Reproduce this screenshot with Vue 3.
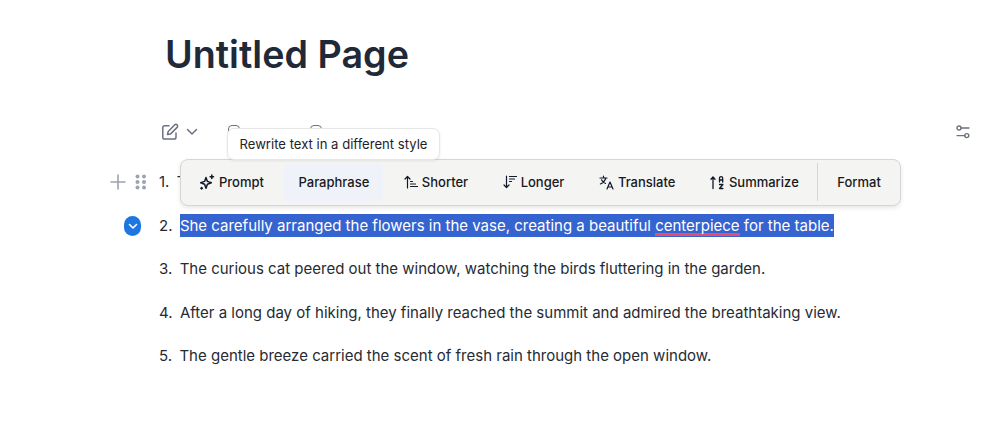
<script setup>
const items = [
  { n: 1, text: 'T' },
  { n: 2, text: 'She carefully arranged the flowers in the vase, creating a beautiful ', miss: 'centerpiece', after: ' for the table.', selected: true },
  { n: 3, text: 'The curious cat peered out the window, watching the birds fluttering in the garden.' },
  { n: 4, text: 'After a long day of hiking, they finally reached the summit and admired the breathtaking view.' },
  { n: 5, text: 'The gentle breeze carried the scent of fresh rain through the open window.' }
]
</script>

<template>
  <div class="page">
    <h1 class="title">Untitled Page</h1>

    <div class="bar">
      <svg class="ic edit" width="18" height="18" viewBox="0 0 18 18" fill="none" stroke="#6b7280" stroke-width="1.5" stroke-linecap="round" stroke-linejoin="round">
        <path d="M8 2.8H3.6A1.8 1.8 0 0 0 1.8 4.6v9.6A1.8 1.8 0 0 0 3.6 16h9.6a1.8 1.8 0 0 0 1.8-1.8V10" />
        <path d="M13.6 1.9a1.7 1.7 0 0 1 2.5 2.5L9.6 10.9l-3.1.7.7-3.1z" />
      </svg>
      <svg class="ic chev" width="12" height="8" viewBox="0 0 12 8" fill="none" stroke="#6b7280" stroke-width="1.5" stroke-linecap="round" stroke-linejoin="round">
        <path d="M1.5 1.5 6 6l4.5-4.5" />
      </svg>
      <div class="ghost g1"></div>
      <div class="ghost g2"></div>
      <svg class="ic sliders" width="14" height="14" viewBox="0 0 14 14" fill="none" stroke="#6b7280" stroke-width="1.4" stroke-linecap="round">
        <circle cx="3" cy="3" r="2" />
        <path d="M5 3h8" />
        <circle cx="10.8" cy="10.6" r="2" />
        <path d="M1 10.6h7.8" />
      </svg>
    </div>

    <ol class="list">
      <li v-for="item in items" :key="item.n" class="row">
        <span class="num">{{ item.n }}.</span>
        <span v-if="item.selected" class="sel">{{ item.text }}<span class="miss">{{ item.miss }}</span>{{ item.after }}</span>
        <span v-else>{{ item.text }}</span>
      </li>
    </ol>

    <div class="handle">
      <svg width="18" height="18" viewBox="0 0 18 18" fill="none" stroke="#9ca3af" stroke-width="1.6">
        <path d="M9 1.5v15M1.5 9h15" />
      </svg>
      <svg width="12" height="16" viewBox="0 0 12 16" fill="#9ca3af">
        <circle cx="2.5" cy="2.5" r="2" /><circle cx="9" cy="2.5" r="2" />
        <circle cx="2.5" cy="8" r="2" /><circle cx="9" cy="8" r="2" />
        <circle cx="2.5" cy="13.5" r="2" /><circle cx="9" cy="13.5" r="2" />
      </svg>
    </div>

    <div class="badge">
      <svg width="10" height="7" viewBox="0 0 10 7" fill="none" stroke="#fff" stroke-width="1.6" stroke-linecap="round" stroke-linejoin="round">
        <path d="M1.5 1.5 5 5l3.5-3.5" />
      </svg>
    </div>

    <div class="toolbar">
      <button class="tb prompt">
        <svg width="16" height="16" viewBox="0 0 16 16" fill="none" stroke="#111827" stroke-width="1.5" stroke-linejoin="round" stroke-linecap="round">
          <path d="M7 3.5 8.4 7.4 12.3 8.8 8.4 10.2 7 14.2 5.6 10.2 1.7 8.8 5.6 7.4z" />
          <path d="M12.8 1v3.4M11.1 2.7h3.4" />
          <path d="M2.6 13.4v1.6M1.8 14.2h1.6" />
        </svg>
        Prompt
      </button>
      <button class="tb active">Paraphrase</button>
      <button class="tb">
        <svg width="14" height="14" viewBox="0 0 14 14" fill="none" stroke="#111827" stroke-width="1.2" stroke-linecap="round" stroke-linejoin="round">
          <path d="M3.5 13V1.5M1 4l2.5-2.5L6 4" />
          <path d="M6.5 6.5h2M6.5 9h5M6.5 11.5h7" />
        </svg>
        Shorter
      </button>
      <button class="tb">
        <svg width="14" height="14" viewBox="0 0 14 14" fill="none" stroke="#111827" stroke-width="1.2" stroke-linecap="round" stroke-linejoin="round">
          <path d="M3.5 1v11.5M1 10l2.5 2.5L6 10" />
          <path d="M6.5 1.5h7M6.5 4h5M6.5 6.5h2" />
        </svg>
        Longer
      </button>
      <button class="tb">
        <svg width="15" height="15" viewBox="0 0 15 15" fill="none" stroke="#111827" stroke-width="1.2" stroke-linecap="round" stroke-linejoin="round">
          <path d="M1 3h7M4.5 1v2M6.8 3C6 6 3.8 8 1.4 9M2.5 4.8c.8 1.8 2.3 3 4 3.7" />
          <path d="M8 14l3-7 3 7M9 12h4" />
        </svg>
        Translate
      </button>
      <button class="tb">
        <svg width="15" height="15" viewBox="0 0 15 15" fill="none" stroke="#111827" stroke-width="1.3" stroke-linecap="round" stroke-linejoin="round">
          <path d="M3 13.5V2M1 4.2 3 2l2 2.2" />
          <path d="M9.5 7V3.2a1.6 1.6 0 0 1 3.2 0V7M9.5 5h3.2" />
          <path d="M9.5 9.5h3.4L9.5 13.5h3.4" />
        </svg>
        Summarize
      </button>
      <span class="sep"></span>
      <button class="tb format">Format</button>
    </div>

    <div class="tip">Rewrite text in a different style</div>
  </div>
</template>

<style scoped>
.page {
  position: relative;
  width: 992px;
  height: 442px;
  overflow: hidden;
  background: #fff;
  font-family: Inter, "Liberation Sans", sans-serif;
  color: #1f2937;
}
.title {
  margin: 0;
  padding: 29px 0 0 165px;
  font-size: 37.7px;
  line-height: 50px;
  font-weight: 600;
  color: #1f2937;
}
.bar {
  position: relative;
  height: 24px;
  margin-top: 41px;
  display: flex;
  align-items: center;
  padding-left: 161px;
  padding-right: 22px;
}
.edit { margin-right: 7px; }
.chev { margin-right: 30px; }
.ghost {
  width: 10px;
  height: 14px;
  border: 1.5px solid #6b7280;
  border-radius: 4px;
  margin-top: 1px;
}
.g1 { margin-right: 70px; }
.sliders { margin-left: auto; }
.list {
  list-style: none;
  margin: 0;
  padding: 26.4px 0 0 159px;
  font-size: 15px;
  line-height: 24px;
}
.row {
  display: flex;
  height: 43.4px;
  white-space: nowrap;
  color: #262b33;
}
.num { flex: none; margin-right: 7.4px; }
.sel {
  background: #3563d0;
  color: #fff;
  height: 23px;
}
.miss {
  padding-bottom: 1.5px;
  background: repeating-linear-gradient(90deg, #e8506a 0 2px, #d05282 2px 3px) left bottom / 100% 3px no-repeat;
}
.handle {
  position: absolute;
  left: 109px;
  top: 173px;
  display: flex;
  align-items: center;
  gap: 8px;
}
.badge {
  position: absolute;
  left: 124px;
  top: 216px;
  width: 17px;
  height: 20px;
  border-radius: 9px;
  background: #1d76e2;
  display: flex;
  align-items: center;
  justify-content: center;
}
.toolbar {
  position: absolute;
  left: 180px;
  top: 159px;
  width: 721px;
  height: 47px;
  box-sizing: border-box;
  display: flex;
  align-items: center;
  gap: 6.5px;
  padding: 0 4px 1px;
  background: #f4f4f3;
  border: 1px solid #d6d6d6;
  border-radius: 8px;
  box-shadow: 0 2px 4px rgba(0, 0, 0, 0.1);
}
.tb {
  display: flex;
  align-items: center;
  gap: 4px;
  height: 37px;
  padding: 0 14px;
  border: none;
  border-radius: 4px;
  background: transparent;
  font: 500 13px Inter, "Liberation Sans", sans-serif;
  color: #17191c;
  white-space: nowrap;
}
.active { background: #eff2f8; }
.sep {
  width: 1px;
  height: 38px;
  background: #d6d6d6;
  margin-left: -2px;
  margin-right: -1.5px;
}
.tip {
  position: absolute;
  left: 227px;
  top: 128px;
  width: 213px;
  height: 32px;
  box-sizing: border-box;
  display: flex;
  align-items: center;
  justify-content: center;
  background: #fff;
  border: 1px solid #e7e7e7;
  border-radius: 7px;
  font-size: 13.1px;
  color: #1f2328;
  box-shadow: 0 1px 3px rgba(0, 0, 0, 0.08);
}
</style>
